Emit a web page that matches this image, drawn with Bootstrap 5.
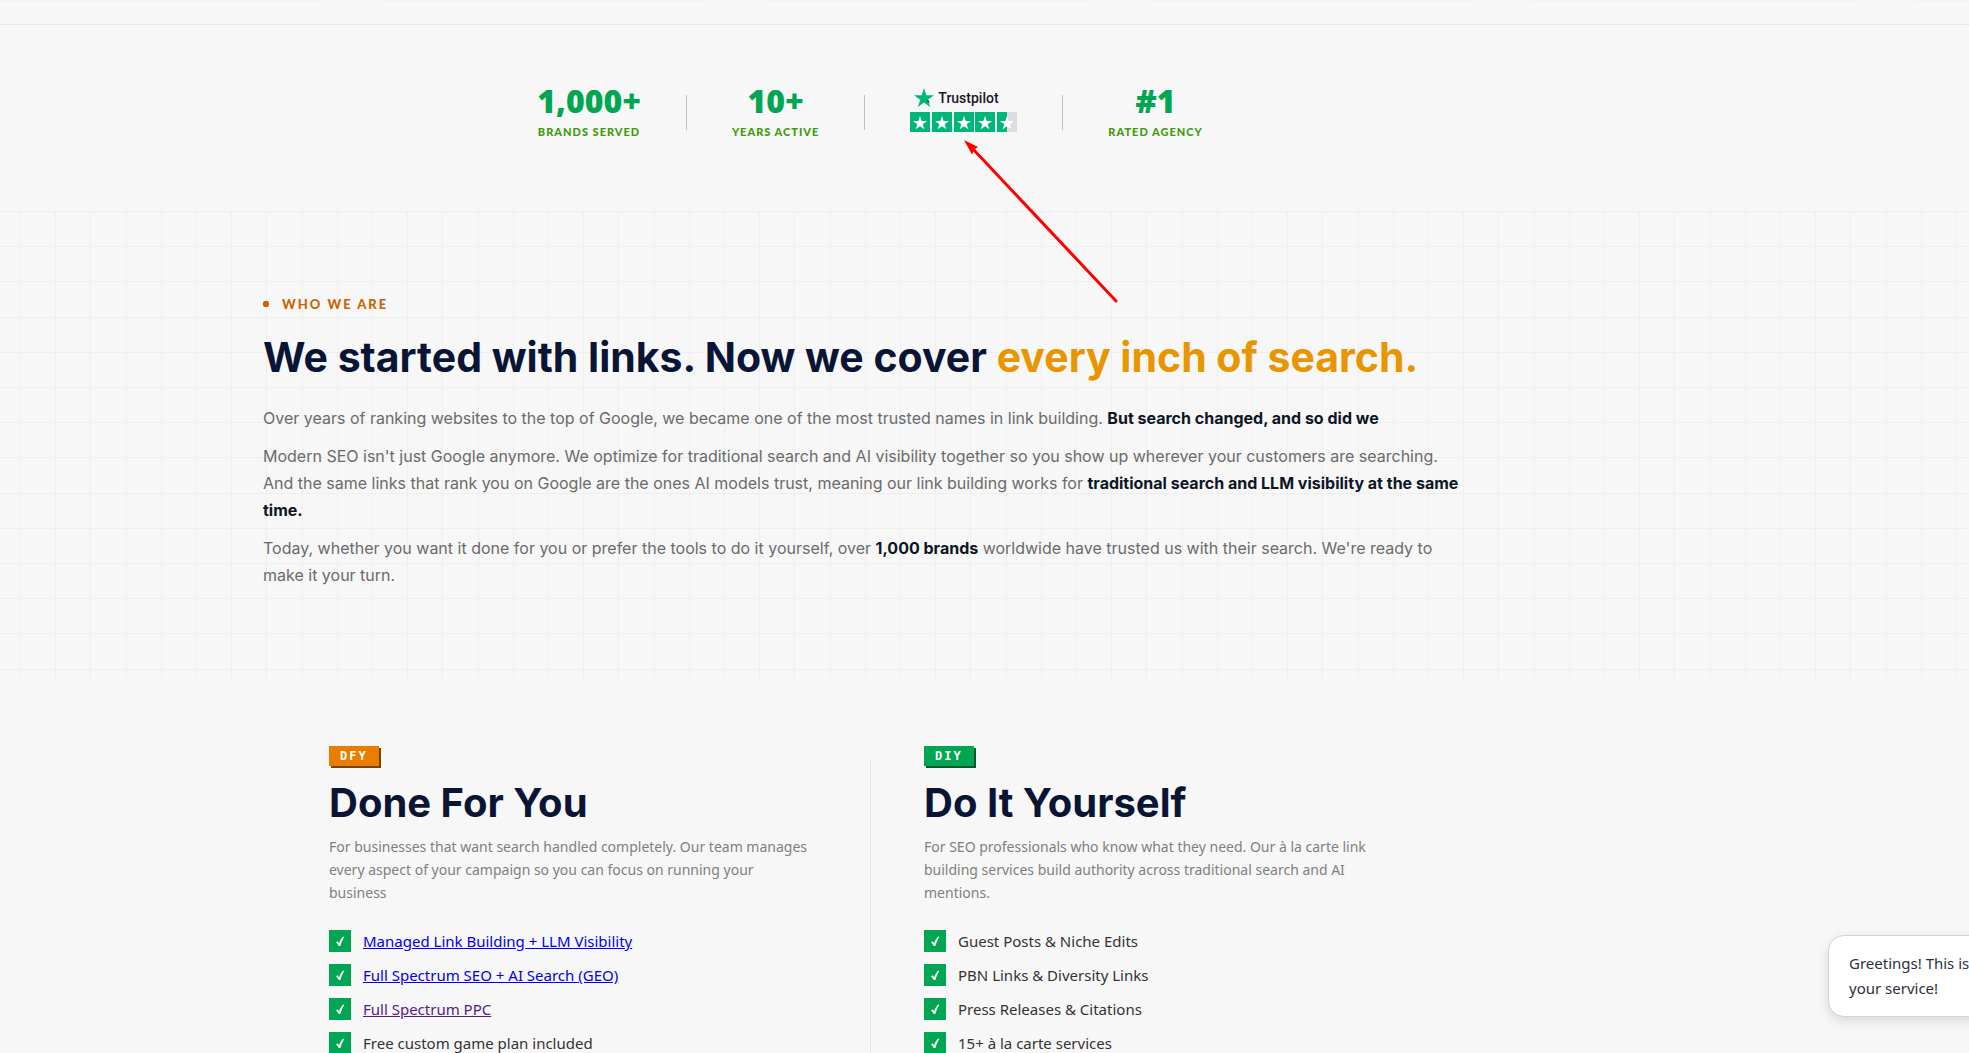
<!DOCTYPE html>
<html lang="en">
<head>
<meta charset="utf-8">
<meta name="viewport" content="width=device-width, initial-scale=1">
<title>Who we are</title>
<link href="https://cdn.jsdelivr.net/npm/bootstrap@5.3.0/dist/css/bootstrap.min.css" rel="stylesheet">
<style>
  body { background: #f7f7f7; font-family: Inter, "Liberation Sans", sans-serif; color: #6b6b6b; }
  .page { height: 100vh; }
  .gutter { padding-right: 229px; }
  .strip { height: 25px; border-bottom: 1px solid #e9e9e9; }
  .strip-shade { flex: 0 0 323px; height: 2px; background: #f3f3f3; }
  .strip-row { gap: 60px; }

  .stats { padding-top: 60px; padding-bottom: 71px; gap: 45px; }
  .stat-value { font: 800 32px/32px "Open Sans", sans-serif; color: #00a651; margin-bottom: 7px; }
  .stat-label { font: 900 11px/16px Lato, sans-serif; letter-spacing: 1px; color: #3f9a0c; }
  .rule { width: 1px; height: 35px; background: #c9bfb4; }
  .trust { padding-bottom: 5px; }
  .trust-name { font: 500 14px/20px Roboto, sans-serif; color: #191919; }
  .arrow { left: 54px; top: 52px; pointer-events: none; z-index: 2; }

  .about {
    background-image:
      repeating-linear-gradient(90deg, #efefef 0 1px, transparent 1px 20%),
      repeating-linear-gradient(180deg, #efefef 0 1px, transparent 1px 20%);
    background-size: 176px 176px;
    background-position: 20px 0;
    padding-top: 83px; padding-bottom: 91px;
  }
  .about-inner { width: 1214px; }
  .eyebrow { font: 900 13px/20px Lato, sans-serif; letter-spacing: 2px; color: #cc6300; gap: 13px; margin-bottom: 19px; }
  .dot { width: 6px; height: 6px; border-radius: 2px; background: #cc6300; }
  h1 { font-size: 41px; line-height: 48px; font-weight: 700; color: #0a1535; margin-bottom: 24px; }
  h1 em { font-style: normal; color: #e79600; }
  .copy p { font-size: 16px; line-height: 27px; margin-bottom: 11px; max-width: 1204px; }
  .copy p:last-child { margin-bottom: 0; }
  .copy strong { color: #0c1626; font-weight: 700; }

  .plans { padding-top: 66px; font-family: "Noto Sans", "Open Sans", sans-serif; }
  .plans-inner { width: 1082px; }
  .plan-second { padding-left: 54px; }
  .plan-rule { width: 1px; background: #e5e5e5; margin-top: 13px; margin-right: -1px; }
  .tag { font: 700 12px/20px "DejaVu Sans Mono", monospace; letter-spacing: 2px; color: #fff; width: 50px; padding-left: 11px; margin-bottom: 13px; }
  .tag-dfy { background: #e87d00; box-shadow: 2px 2px 0 #7d4100; }
  .tag-diy { background: #00a651; box-shadow: 2px 2px 0 #005c2c; }
  h2 { font: 700 40px/48px Inter, sans-serif; color: #0a1535; margin-bottom: 8px; }
  .plan p { font-size: 14px; line-height: 23px; max-width: 480px; color: #808080; margin-bottom: 26px; }
  .plan ul { gap: 12px; font-size: 15px; line-height: 22px; color: #333; }
  .plan li { gap: 12px; }
  .tick { width: 22px; height: 22px; background: #00a651; flex: none; }
  .plan a { color: #0000ee; }
  .plan a.seen { color: #551a8b; }

  .chat {
    right: -160px; bottom: 36px; width: 301px; height: 82px; padding: 15px 20px;
    border: 1px solid #cbd5e1; border-radius: 16px; background: #fff;
    box-shadow: 0 4px 12px rgba(0,0,0,.12);
    font: 400 15px/25px "Noto Sans", "Open Sans", sans-serif; color: #2b2f3e; white-space: nowrap;
  }
</style>
</head>
<body>
<svg class="d-none">
  <symbol id="star" viewBox="0 0 20 20"><path d="M10 0l2.4 7.3H20l-6.200 4.500L16.200 19 10 14.500 3.800 19l2.400-7.200L0 7.300h7.600z"/></symbol>
  <symbol id="tick" viewBox="0 0 22 22"><path d="M7 12.200l1.800-.9 1.200 2.200C11 10.500 12.500 8.200 14.300 6.600l1 .3c-1.600 2.400-3 5.600-3.900 9H9.700C9 14.600 8.100 13.300 7 12.200z" fill="#fff"/></symbol>
</svg>

<div class="page position-relative overflow-hidden">
  <div class="strip overflow-hidden">
    <div class="strip-row d-flex">
      <div class="strip-shade"></div><div class="strip-shade"></div><div class="strip-shade"></div>
      <div class="strip-shade"></div><div class="strip-shade"></div><div class="strip-shade"></div>
    </div>
  </div>

  <section class="gutter">
    <div class="stats d-flex justify-content-center align-items-center text-center">
      <div><div class="stat-value">1,000+</div><div class="stat-label">BRANDS SERVED</div></div>
      <div class="rule"></div>
      <div><div class="stat-value">10+</div><div class="stat-label">YEARS ACTIVE</div></div>
      <div class="rule"></div>
      <div class="trust position-relative">
        <div class="d-flex align-items-center ps-1 mb-1">
          <svg width="20" height="20" fill="#00b67a"><use href="#star"/><path d="M12.500 12.500l2-.6 1.200 3.600z" fill="#005128"/></svg>
          <span class="trust-name ps-1">Trustpilot</span>
        </div>
        <svg class="d-block" width="107" height="20" role="img" aria-label="4.5 stars">
          <path fill="#00b67a" d="M0 0h20v20H0zM22 0h20v20H22zM44 0h20v20H44zM65 0h20v20H65zM87 0h10v20H87z"/>
          <path fill="#dcdce6" d="M97 0h10v20H97z"/>
          <g fill="#fff">
            <use href="#star" x="3" y="4" width="14" height="14"/><use href="#star" x="25" y="4" width="14" height="14"/>
            <use href="#star" x="47" y="4" width="14" height="14"/><use href="#star" x="68" y="4" width="14" height="14"/>
            <use href="#star" x="90" y="4" width="14" height="14"/>
          </g>
        </svg>
        <svg class="arrow position-absolute" width="160" height="170">
          <path d="M8 8L152 161" stroke="#f00" stroke-width="3" stroke-linecap="round"/>
          <path d="M0 0L14 7 10.500 9.500 8 14.500z" fill="#f00"/>
        </svg>
      </div>
      <div class="rule"></div>
      <div><div class="stat-value">#1</div><div class="stat-label">RATED AGENCY</div></div>
    </div>
  </section>

  <section class="about gutter d-flex justify-content-center">
    <div class="about-inner">
      <div class="eyebrow d-flex align-items-center"><span class="dot"></span>WHO WE ARE</div>
      <h1>We started with links. Now we cover <em>every inch of search.</em></h1>
      <div class="copy">
        <p>Over years of ranking websites to the top of Google, we became one of the most trusted names in link building. <strong>But search changed, and so did we</strong></p>
        <p>Modern SEO isn't just Google anymore. We optimize for traditional search and AI visibility together so you show up wherever your customers are searching. And the same links that rank you on Google are the ones AI models trust, meaning our link building works for <strong>traditional search and LLM visibility at the same time.</strong></p>
        <p>Today, whether you want it done for you or prefer the tools to do it yourself, over <strong>1,000 brands</strong> worldwide have trusted us with their search. We're ready to make it your turn.</p>
      </div>
    </div>
  </section>

  <section class="plans gutter d-flex justify-content-center">
    <div class="plans-inner d-flex">
      <div class="plan w-50">
        <div class="tag tag-dfy">DFY</div>
        <h2>Done For You</h2>
        <p>For businesses that want search handled completely. Our team manages every aspect of your campaign so you can focus on running your business</p>
        <ul class="list-unstyled d-flex flex-column">
          <li class="d-flex"><svg class="tick"><use href="#tick"/></svg><a href="#managed">Managed Link Building + LLM Visibility</a></li>
          <li class="d-flex"><svg class="tick"><use href="#tick"/></svg><a href="#seo">Full Spectrum SEO + AI Search (GEO)</a></li>
          <li class="d-flex"><svg class="tick"><use href="#tick"/></svg><a class="seen" href="#ppc">Full Spectrum PPC</a></li>
          <li class="d-flex"><svg class="tick"><use href="#tick"/></svg>Free custom game plan included</li>
        </ul>
      </div>
      <div class="plan-rule"></div>
      <div class="plan plan-second w-50">
        <div class="tag tag-diy">DIY</div>
        <h2>Do It Yourself</h2>
        <p>For SEO professionals who know what they need. Our à la carte link building services build authority across traditional search and AI mentions.</p>
        <ul class="list-unstyled d-flex flex-column">
          <li class="d-flex"><svg class="tick"><use href="#tick"/></svg>Guest Posts &amp; Niche Edits</li>
          <li class="d-flex"><svg class="tick"><use href="#tick"/></svg>PBN Links &amp; Diversity Links</li>
          <li class="d-flex"><svg class="tick"><use href="#tick"/></svg>Press Releases &amp; Citations</li>
          <li class="d-flex"><svg class="tick"><use href="#tick"/></svg>15+ à la carte services</li>
        </ul>
      </div>
    </div>
  </section>

  <div class="chat position-absolute">Greetings! This is<br>your service!</div>
</div>
<script src="https://cdn.jsdelivr.net/npm/bootstrap@5.3.0/dist/js/bootstrap.bundle.min.js"></script>
</body>
</html>
